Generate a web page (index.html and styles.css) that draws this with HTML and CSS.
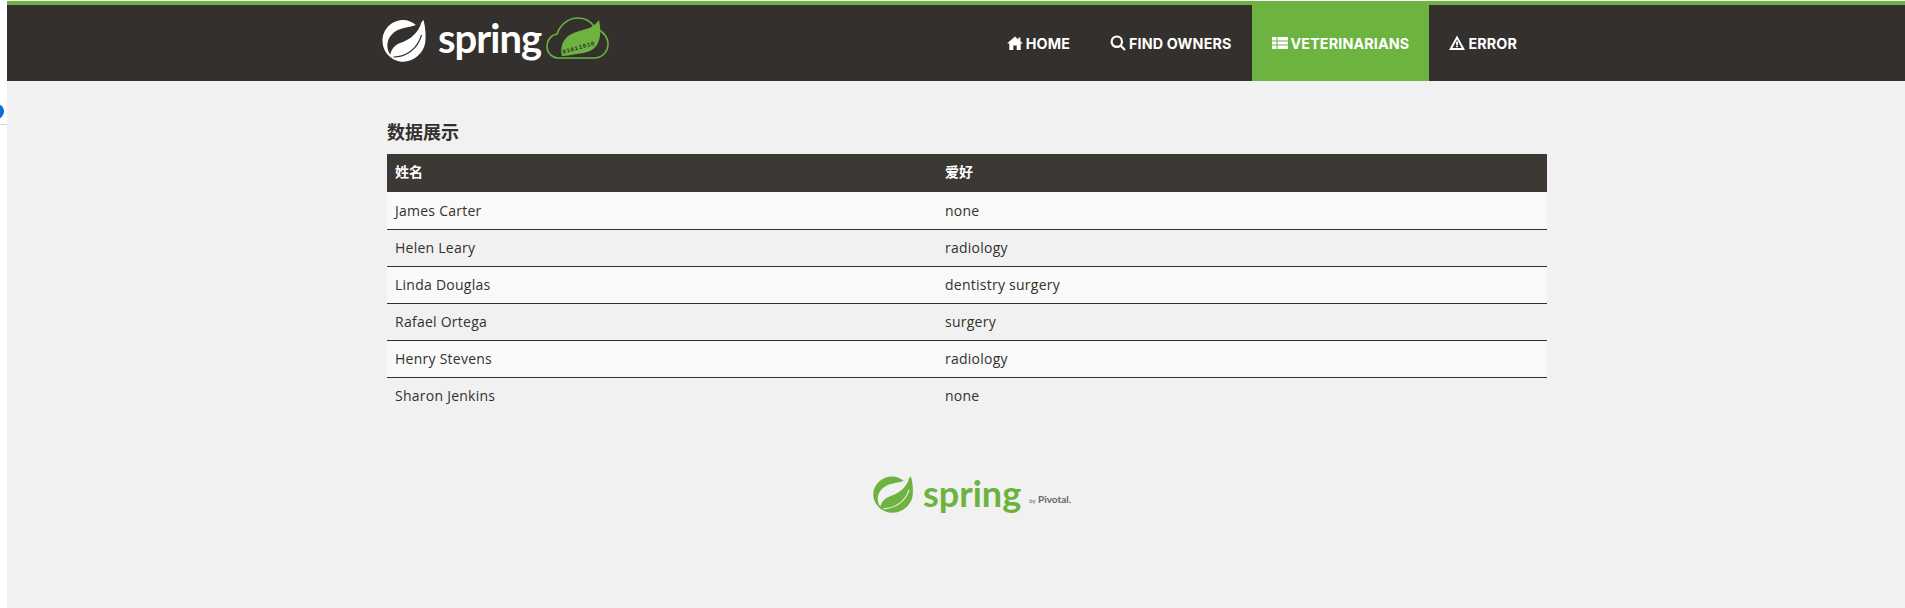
FILE: index.html
```html
<!DOCTYPE html>
<html lang="zh">
<head>
<meta charset="utf-8">
<title>Spring</title>
<link rel="stylesheet" href="styles.css">
</head>
<body>
<span class="dot"></span>
<span class="dot-line"></span>
<div class="page">
  <header class="navbar">
    <div class="brand">
      <svg class="leaf" width="45" height="45" viewBox="0 0 134 135">
        <path fill="#fff" d="M124 8c-6 9-13 14-22 17C91 15 77 9 63 9 29 9 1 37 1 71s28 63 62 63c32 0 60-24 66-55 3-22 1-48-5-71z"/>
        <path fill="#34302d" d="M24 113C10 92 13 64 36 46c24-18 54-12 82-30-8 30-32 52-66 63-14 5-24 18-28 34z"/>
        <path fill="none" stroke="#34302d" stroke-width="3.500" d="M34 120c38 0 72-24 84-66"/>
      </svg>
      <span class="wordmark">spring</span>
      <svg class="cloud" width="63" height="42" viewBox="0 0 63 42">
        <path fill="none" stroke="#6db33f" stroke-width="1.600" d="M13 41C6 41 1 36 1 29c0-6 4-11 10-12C14 8 22 1 32 1c7 0 13 3 17 10 7 2 13 9 13 16 0 8-6 14-14 14z"/>
        <path fill="#6db33f" d="M53 3c2 10 2 18-2 25-4 6-11 8-20 9-7 1-12 2-15 2-2-7 0-14 5-19 6-5 13-6 19-8 5-1 9-4 13-9z"/>
        <text class="bits" transform="translate(17 37) rotate(-16)">01011010</text>
      </svg>
    </div>
    <nav class="menu">
      <a class="item" href="#">
        <svg class="ico" viewBox="0 0 16 16"><path d="M8 1.500 0 8.500h2.300V15h4V10.500h3.400V15h4V8.500H16l-2.600-2.300V2.500h-2v2z"/></svg>HOME
      </a>
      <a class="item" href="#">
        <svg class="ico" viewBox="0 0 16 16"><path fill="none" stroke="#fff" stroke-width="2.200" d="M6.800 1.500a5.200 5.200 0 1 0 0 10.400 5.200 5.200 0 0 0 0-10.400zM10.500 10.500 15 15"/></svg>FIND OWNERS
      </a>
      <a class="item item-active" href="#">
        <svg class="ico" viewBox="0 0 16 14"><path d="M0 1h4.500v3.400H0zM5.500 1H16v3.400H5.500zM0 5.400h4.500v3.200H0zM5.500 5.400H16v3.200H5.500zM0 9.600h4.500V13H0zM5.500 9.600H16V13H5.500z"/></svg>VETERINARIANS
      </a>
      <a class="item" href="#">
        <svg class="ico" viewBox="0 0 16 16"><path fill-rule="evenodd" d="M8 .5 16 15H0zM8 4.500 3.400 13h9.200z"/><path d="M7.100 6.500h1.800v3.500H7.100zM7.100 10.500h1.800v1.800H7.100z"/></svg>ERROR
      </a>
    </nav>
  </header>
  <main class="content">
    <h2 class="title">数据展示</h2>
    <table class="table">
      <thead>
        <tr><th class="col-name">姓名</th><th>爱好</th></tr>
      </thead>
      <tbody>
        <tr><td>James Carter</td><td>none</td></tr>
        <tr><td>Helen Leary</td><td>radiology</td></tr>
        <tr><td>Linda Douglas</td><td>dentistry surgery</td></tr>
        <tr><td>Rafael Ortega</td><td>surgery</td></tr>
        <tr><td>Henry Stevens</td><td>radiology</td></tr>
        <tr><td>Sharon Jenkins</td><td>none</td></tr>
      </tbody>
    </table>
    <footer class="foot">
      <svg class="foot-leaf" width="41" height="39" viewBox="0 0 134 135" preserveAspectRatio="none">
        <path fill="#6db33f" d="M124 8c-6 9-13 14-22 17C91 15 77 9 63 9 29 9 1 37 1 71s28 63 62 63c32 0 60-24 66-55 3-22 1-48-5-71z"/>
        <path fill="#f1f1f1" d="M24 113C10 92 13 64 36 46c24-18 54-12 82-30-8 30-32 52-66 63-14 5-24 18-28 34z"/>
        <path fill="none" stroke="#f1f1f1" stroke-width="3.500" d="M34 120c38 0 72-24 84-66"/>
      </svg>
      <span class="foot-word">spring</span>
      <span class="foot-by"><small>by</small> Pivotal.</span>
    </footer>
  </main>
</div>
</body>
</html>
```
FILE: styles.css
```css
* { box-sizing: border-box; }
html, body { margin: 0; height: 100%; }
body {
  background: #fff;
  padding-top: 1px;
  font-family: "Open Sans", "Noto Sans CJK SC", sans-serif;
  color: #34302d;
  overflow: hidden;
}
.dot {
  position: absolute;
  left: -10px;
  top: 104px;
  width: 14px;
  height: 15px;
  border-radius: 50%;
  background: #0a6fd0;
}
.dot-line {
  position: absolute;
  left: 0;
  top: 124px;
  width: 7px;
  height: 1px;
  background: #d8d8d8;
}
.page {
  margin-left: 7px;
  min-height: 607px;
  background: #f1f1f1;
}
.navbar {
  height: 80px;
  background: #34302d;
  border-top: 4px solid #6db33f;
  display: flex;
  justify-content: space-between;
  padding: 0 368px 0 375px;
}
.brand {
  display: flex;
  align-items: flex-start;
  padding-top: 12px;
}
.leaf { margin-right: 11px; flex: none; }
.wordmark {
  font-family: "Lato", sans-serif;
  font-size: 40px;
  font-weight: 700;
  line-height: 42px;
  color: #fff;
  letter-spacing: -1px;
}
.cloud { margin-left: 5px; flex: none; }
.bits {
  font-family: "Liberation Mono", monospace;
  font-size: 6px;
  font-weight: 700;
  letter-spacing: 0.6px;
  fill: #34302d;
}
.menu { display: flex; align-items: stretch; }
.item {
  display: flex;
  align-items: center;
  padding: 0 20px;
  color: #fff;
  text-decoration: none;
  font-family: "Inter", sans-serif;
  font-size: 14.300px;
  font-weight: 700;
  letter-spacing: 0.15px;
  white-space: nowrap;
}
.item-active { background: #6db33f; }
.ico {
  width: 16px;
  height: 16px;
  margin-right: 3px;
  fill: #fff;
  flex: none;
}
.content {
  width: 1160px;
  margin-left: 380px;
}
.title {
  margin: 39px 0 0;
  height: 34px;
  font-size: 18px;
  font-weight: 700;
  line-height: 24px;
  color: #34302d;
}
.table {
  width: 100%;
  border-collapse: collapse;
  table-layout: fixed;
  font-size: 14px;
  letter-spacing: 0.25px;
}
.table th {
  height: 38px;
  padding: 0 8px 5px;
  text-align: left;
  background: #3c3834;
  color: #fff;
  font-size: 14px;
  font-weight: 700;
  letter-spacing: 0;
}
.col-name { width: 550px; }
.table td {
  height: 37px;
  padding: 0 8px;
  border-top: 1px solid #34302d;
  color: #34302d;
}
.table tbody tr:first-child td { border-top: 0; }
.table tbody tr:nth-child(odd) { background: #f9f9f9; }
.foot {
  display: flex;
  align-items: center;
  margin-top: 54px;
  padding-left: 486px;
  height: 50px;
}
.foot-leaf { flex: none; margin-right: 9px; }
.foot-word {
  font-family: "Lato", sans-serif;
  font-size: 36px;
  font-weight: 700;
  color: #6db33f;
  line-height: 42px;
}
.foot-by {
  font-family: "Lato", sans-serif;
  font-size: 10px;
  font-weight: 700;
  color: #666;
  margin: 12px 0 0 8px;
}
.foot-by small { font-size: 6px; font-weight: 400; }
```
